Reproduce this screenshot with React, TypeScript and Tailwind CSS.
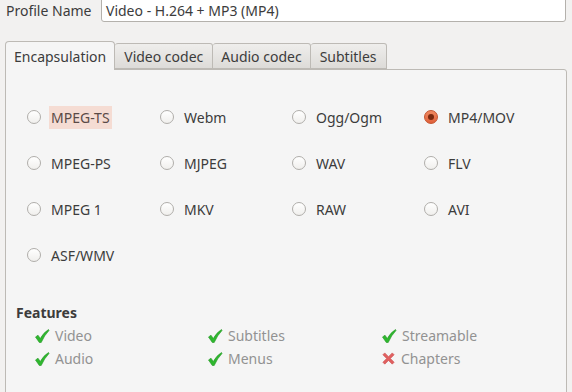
import React from 'react';

const formats = [
  ['MPEG-TS', 'Webm', 'Ogg/Ogm', 'MP4/MOV'],
  ['MPEG-PS', 'MJPEG', 'WAV', 'FLV'],
  ['MPEG 1', 'MKV', 'RAW', 'AVI'],
  ['ASF/WMV'],
];

const features = [
  { label: 'Video', ok: true },
  { label: 'Subtitles', ok: true },
  { label: 'Streamable', ok: true },
  { label: 'Audio', ok: true },
  { label: 'Menus', ok: true },
  { label: 'Chapters', ok: false },
];

const tabs = [
  { label: 'Video codec', pad: 'px-[9px]' },
  { label: 'Audio codec', pad: 'px-[8px]' },
  { label: 'Subtitles', pad: 'px-[9px]' },
];

const Radio = ({ checked }: { checked?: boolean }) =>
  checked ? (
    <span className="w-[14px] h-[14px] rounded-full border border-[#c4542f] bg-gradient-to-b from-[#f08a62] to-[#e0603a] flex items-center justify-center">
      <span className="w-[6px] h-[6px] rounded-full bg-[#7a2a10]" />
    </span>
  ) : (
    <span className="w-[14px] h-[14px] rounded-full border border-[#b0aeaa] bg-gradient-to-b from-white to-[#f0efed]" />
  );

const Check = () => (
  <svg width="16" height="16" viewBox="0 0 16 16">
    <path d="M1.5 9 L4 7.2 L6.3 10.5 Q9.5 4.5 14.5 1.5 L15 2.5 Q10.5 7 7.2 14.5 L5.3 14.5 Z" fill="#2eb82e" stroke="#249424" strokeWidth="0.6" strokeLinejoin="round" />
  </svg>
);

const Cross = () => (
  <svg width="15" height="15" viewBox="0 0 16 16">
    <path d="M2 4 L4 2 L8 6 L12 2 L14 4 L10 8 L14 12 L12 14 L8 10 L4 14 L2 12 L6 8 Z" fill="#e06060" stroke="#c94848" strokeWidth="0.6" strokeLinejoin="round" />
  </svg>
);

export default function App() {
  return (
    <div className="w-[572px] h-[392px] overflow-hidden bg-[#f2f1f0] text-[14px] text-[#3c3c3c] font-['Noto_Sans',sans-serif]">
      {/* profile name row */}
      <div className="flex items-center -mt-[5px] h-[27px]">
        <span className="ml-[6px] w-[95px] mt-[4px]">Profile Name</span>
        <div className="w-[465px] h-[27px] bg-white border border-[#b4b1ac] rounded-[3px] flex items-center px-[4px] pt-[3px]">
          Video - H.264 + MP3 (MP4)
        </div>
      </div>

      {/* tabs */}
      <div className="flex items-end mt-[19px] ml-[5px] h-[28px]">
        <div className="h-[29px] -mb-px px-[8px] flex items-center border border-b-0 border-[#bdbab5] rounded-t-[4px] bg-[#f5f5f5] z-10">
          Encapsulation
        </div>
        {tabs.map((t) => (
          <div key={t.label} className={`h-[26px] ${t.pad} flex items-center border border-l-0 border-[#bdbab5] rounded-t-[3px] bg-gradient-to-b from-[#efeeec] to-[#dddbd8]`}>
            {t.label}
          </div>
        ))}
      </div>

      {/* panel */}
      <div className="ml-[5px] w-[562px] h-[330px] border border-[#bdbab5] rounded-tr-[3px] bg-[#f5f5f5]">
        <div className="grid grid-cols-[133px_132px_132px_132px] ml-[21px] mt-[24px] auto-rows-[46px]">
          {formats.flat().map((f) => (
            <div key={f} className="flex items-center">
              <Radio checked={f === 'MP4/MOV'} />
              <span className={f === 'MPEG-TS' ? 'ml-[8px] px-[2px] py-[1px] bg-[#f5dcd3] text-[#5a4a46]' : 'ml-[10px]'}>{f}</span>
            </div>
          ))}
        </div>

        <div className="ml-[10px] mt-[25px] font-bold leading-[20px]">Features</div>
        <div className="grid grid-cols-[173px_174px_174px] ml-[28px] mt-[1px] auto-rows-[23px]">
          {features.map((f) => (
            <div key={f.label} className="flex items-center text-[#929292]">
              {f.ok ? <Check /> : <Cross />}
              <span className="ml-[5px]">{f.label}</span>
            </div>
          ))}
        </div>
      </div>
    </div>
  );
}
